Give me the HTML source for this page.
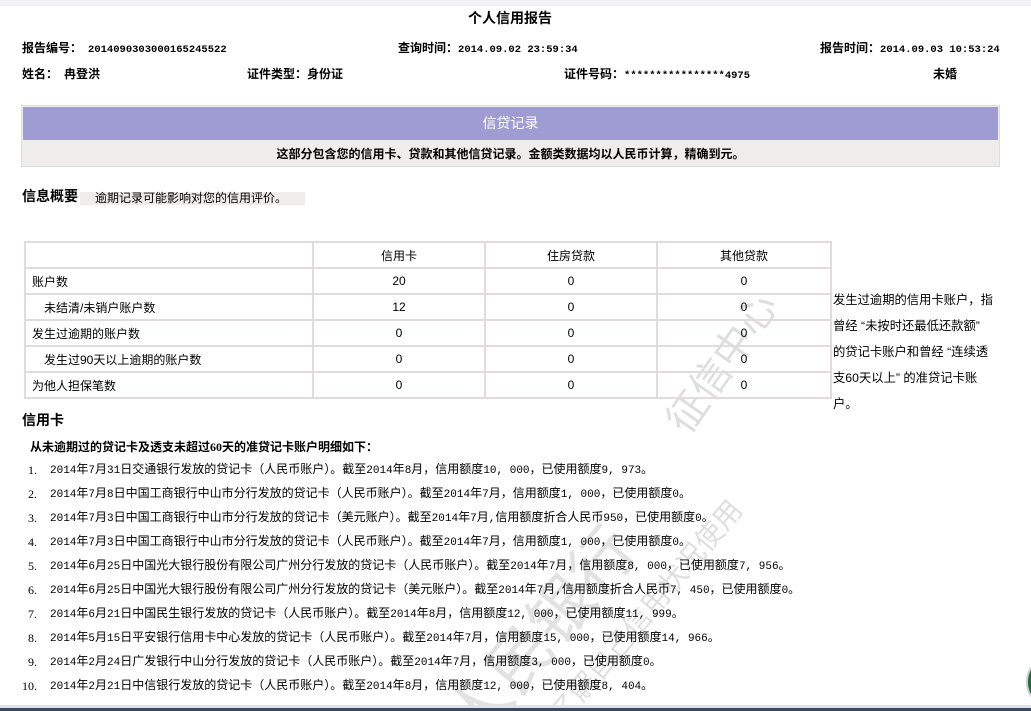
<!DOCTYPE html>
<html><head><meta charset="utf-8"><style>
html,body{margin:0;width:1031px;height:711px;overflow:hidden}
body{position:relative;background:#fff;font-family:"Liberation Serif","Noto Sans CJK SC",sans-serif;font-size:12px;color:#000}
#w{position:absolute;left:0;top:0;width:1031px;height:711px;overflow:hidden}
.a{position:absolute;white-space:nowrap;line-height:14px}
.b{font-weight:bold}
.m{font-family:"Liberation Mono",monospace;font-size:10.5px}
.top{position:absolute;left:0;top:0;width:1031px;height:6px;background:#f2f2f4}
.box{position:absolute;left:21px;top:105px;width:977px;height:60px;border:1px solid #ddd;background:#efecec}
.ban{position:absolute;left:1px;top:1px;right:1px;height:33px;background:#9e9cd2;color:#fff;font-size:14px;text-align:center;line-height:33px;font-family:"Noto Sans CJK SC",sans-serif}
.sub{position:absolute;left:0;right:0;top:36px;text-align:center;line-height:24px;font-weight:bold}
table{position:absolute;left:24px;top:241px;border-collapse:collapse;table-layout:fixed;width:806px;font-family:"Liberation Sans","Noto Sans CJK SC",sans-serif;font-size:12px}
td{border:2px solid #e0dcdc;height:24px;padding:0 6px;text-align:center}
td:first-child{text-align:left}
.ind{padding-left:18px}
ol{position:absolute;left:0;top:462px;margin:0;padding:0;list-style:none;font-family:"Liberation Mono","Noto Sans CJK SC",monospace;font-size:11px}
ol li{position:relative;height:24px;line-height:16px;padding-left:50px;white-space:nowrap;font-size:12px}
ol li b{font-weight:normal;font-size:11px}
ol li span{position:absolute;left:28px;font-family:"Liberation Serif",serif}
.wm{position:absolute;color:#dedede;font-family:"Noto Sans CJK SC",sans-serif;white-space:nowrap}
</style></head><body><div id="w">
<div class="top"></div>
<div class="wm" style="left:420px;top:700px;font-size:64px;transform:rotate(-50deg);transform-origin:left top;color:#e2e2e2">人民银行</div>
<div class="wm" style="left:650px;top:410px;font-size:40px;transform:rotate(-55deg);transform-origin:left top">征信中心</div>
<div class="wm" style="left:540px;top:705px;font-size:28px;transform:rotate(-50deg);transform-origin:left top">了解自己信用状况使用</div>
<div class="a b" style="left:468px;top:13px;font-size:14px">个人信用报告</div>
<div class="a b" style="left:22px;top:41px">报告编号： &nbsp;<span class="m">2014090303000165245522</span></div>
<div class="a b" style="left:398px;top:41px">查询时间：<span class="m">2014.09.02 23:59:34</span></div>
<div class="a b" style="left:820px;top:41px">报告时间：<span class="m">2014.09.03 10:53:24</span></div>
<div class="a b" style="left:22px;top:67px">姓名： &nbsp;冉登洪</div>
<div class="a b" style="left:247px;top:67px">证件类型：身份证</div>
<div class="a b" style="left:564px;top:67px">证件号码：<span class="m">****************4975</span></div>
<div class="a b" style="left:933px;top:67px">未婚</div>
<div class="box"><div class="ban">信贷记录</div><div class="sub">这部分包含您的信用卡、贷款和其他信贷记录。金额类数据均以人民币计算，精确到元。</div></div>
<div class="a b" style="left:22px;top:191px;font-size:14px">信息概要</div>
<div class="a" style="left:80px;top:192px;width:225px;height:13px;background:#efecec;line-height:13px;padding-left:15px;box-sizing:border-box;font-family:'Liberation Sans','Noto Sans CJK SC',sans-serif">逾期记录可能影响对您的信用评价。</div>
<table>
<colgroup><col style="width:288px"><col style="width:172px"><col style="width:172px"><col style="width:174px"></colgroup>
<tr><td></td><td>信用卡</td><td>住房贷款</td><td>其他贷款</td></tr>
<tr><td>账户数</td><td>20</td><td>0</td><td>0</td></tr>
<tr><td class="ind">未结清/未销户账户数</td><td>12</td><td>0</td><td>0</td></tr>
<tr><td>发生过逾期的账户数</td><td>0</td><td>0</td><td>0</td></tr>
<tr><td class="ind">发生过90天以上逾期的账户数</td><td>0</td><td>0</td><td>0</td></tr>
<tr><td>为他人担保笔数</td><td>0</td><td>0</td><td>0</td></tr>
</table>
<div class="a" style="left:833px;top:287px;line-height:26px;font-family:'Liberation Sans','Noto Sans CJK SC',sans-serif;font-size:12.3px">发生过逾期的信用卡账户，指<br>曾经 “未按时还最低还款额”<br>的贷记卡账户和曾经 “连续透<br>支60天以上” 的准贷记卡账<br>户。</div>
<div class="a b" style="left:22px;top:415px;font-size:14px">信用卡</div>
<div class="a b" style="left:30px;top:440px">从未逾期过的贷记卡及透支未超过60天的准贷记卡账户明细如下：</div>
<ol>
<li><span>1.</span><b>2014</b>年<b>7</b>月<b>31</b>日交通银行发放的贷记卡（人民币账户）。截至<b>2014</b>年<b>8</b>月，信用额度<b>10, 000</b>，已使用额度<b>9, 973</b>。</li>
<li><span>2.</span><b>2014</b>年<b>7</b>月<b>8</b>日中国工商银行中山市分行发放的贷记卡（人民币账户）。截至<b>2014</b>年<b>7</b>月，信用额度<b>1, 000</b>，已使用额度<b>0</b>。</li>
<li><span>3.</span><b>2014</b>年<b>7</b>月<b>3</b>日中国工商银行中山市分行发放的贷记卡（美元账户）。截至<b>2014</b>年<b>7</b>月<b>,</b>信用额度折合人民币<b>950</b>，已使用额度<b>0</b>。</li>
<li><span>4.</span><b>2014</b>年<b>7</b>月<b>3</b>日中国工商银行中山市分行发放的贷记卡（人民币账户）。截至<b>2014</b>年<b>7</b>月，信用额度<b>1, 000</b>，已使用额度<b>0</b>。</li>
<li><span>5.</span><b>2014</b>年<b>6</b>月<b>25</b>日中国光大银行股份有限公司广州分行发放的贷记卡（人民币账户）。截至<b>2014</b>年<b>7</b>月，信用额度<b>8, 000</b>，已使用额度<b>7, 956</b>。</li>
<li><span>6.</span><b>2014</b>年<b>6</b>月<b>25</b>日中国光大银行股份有限公司广州分行发放的贷记卡（美元账户）。截至<b>2014</b>年<b>7</b>月<b>,</b>信用额度折合人民币<b>7, 450</b>，已使用额度<b>0</b>。</li>
<li><span>7.</span><b>2014</b>年<b>6</b>月<b>21</b>日中国民生银行发放的贷记卡（人民币账户）。截至<b>2014</b>年<b>8</b>月，信用额度<b>12, 000</b>，已使用额度<b>11, 999</b>。</li>
<li><span>8.</span><b>2014</b>年<b>5</b>月<b>15</b>日平安银行信用卡中心发放的贷记卡（人民币账户）。截至<b>2014</b>年<b>7</b>月，信用额度<b>15, 000</b>，已使用额度<b>14, 966</b>。</li>
<li><span>9.</span><b>2014</b>年<b>2</b>月<b>24</b>日广发银行中山分行发放的贷记卡（人民币账户）。截至<b>2014</b>年<b>7</b>月，信用额度<b>3, 000</b>，已使用额度<b>0</b>。</li>
<li><span style="left:22px">10.</span><b>2014</b>年<b>2</b>月<b>21</b>日中信银行发放的贷记卡（人民币账户）。截至<b>2014</b>年<b>8</b>月，信用额度<b>12, 000</b>，已使用额度<b>8, 404</b>。</li>
</ol>
<div style="position:absolute;left:0;top:705px;width:1031px;height:3px;background:#dfe3e8"></div>
<div style="position:absolute;left:0;top:708px;width:1031px;height:3px;background:#3a4a5a"></div>
<div style="position:absolute;left:1026px;top:660px;width:30px;height:40px;border-radius:50%;background:#1e6b3a;border:2px solid #ccc"></div>
</div></body></html>
